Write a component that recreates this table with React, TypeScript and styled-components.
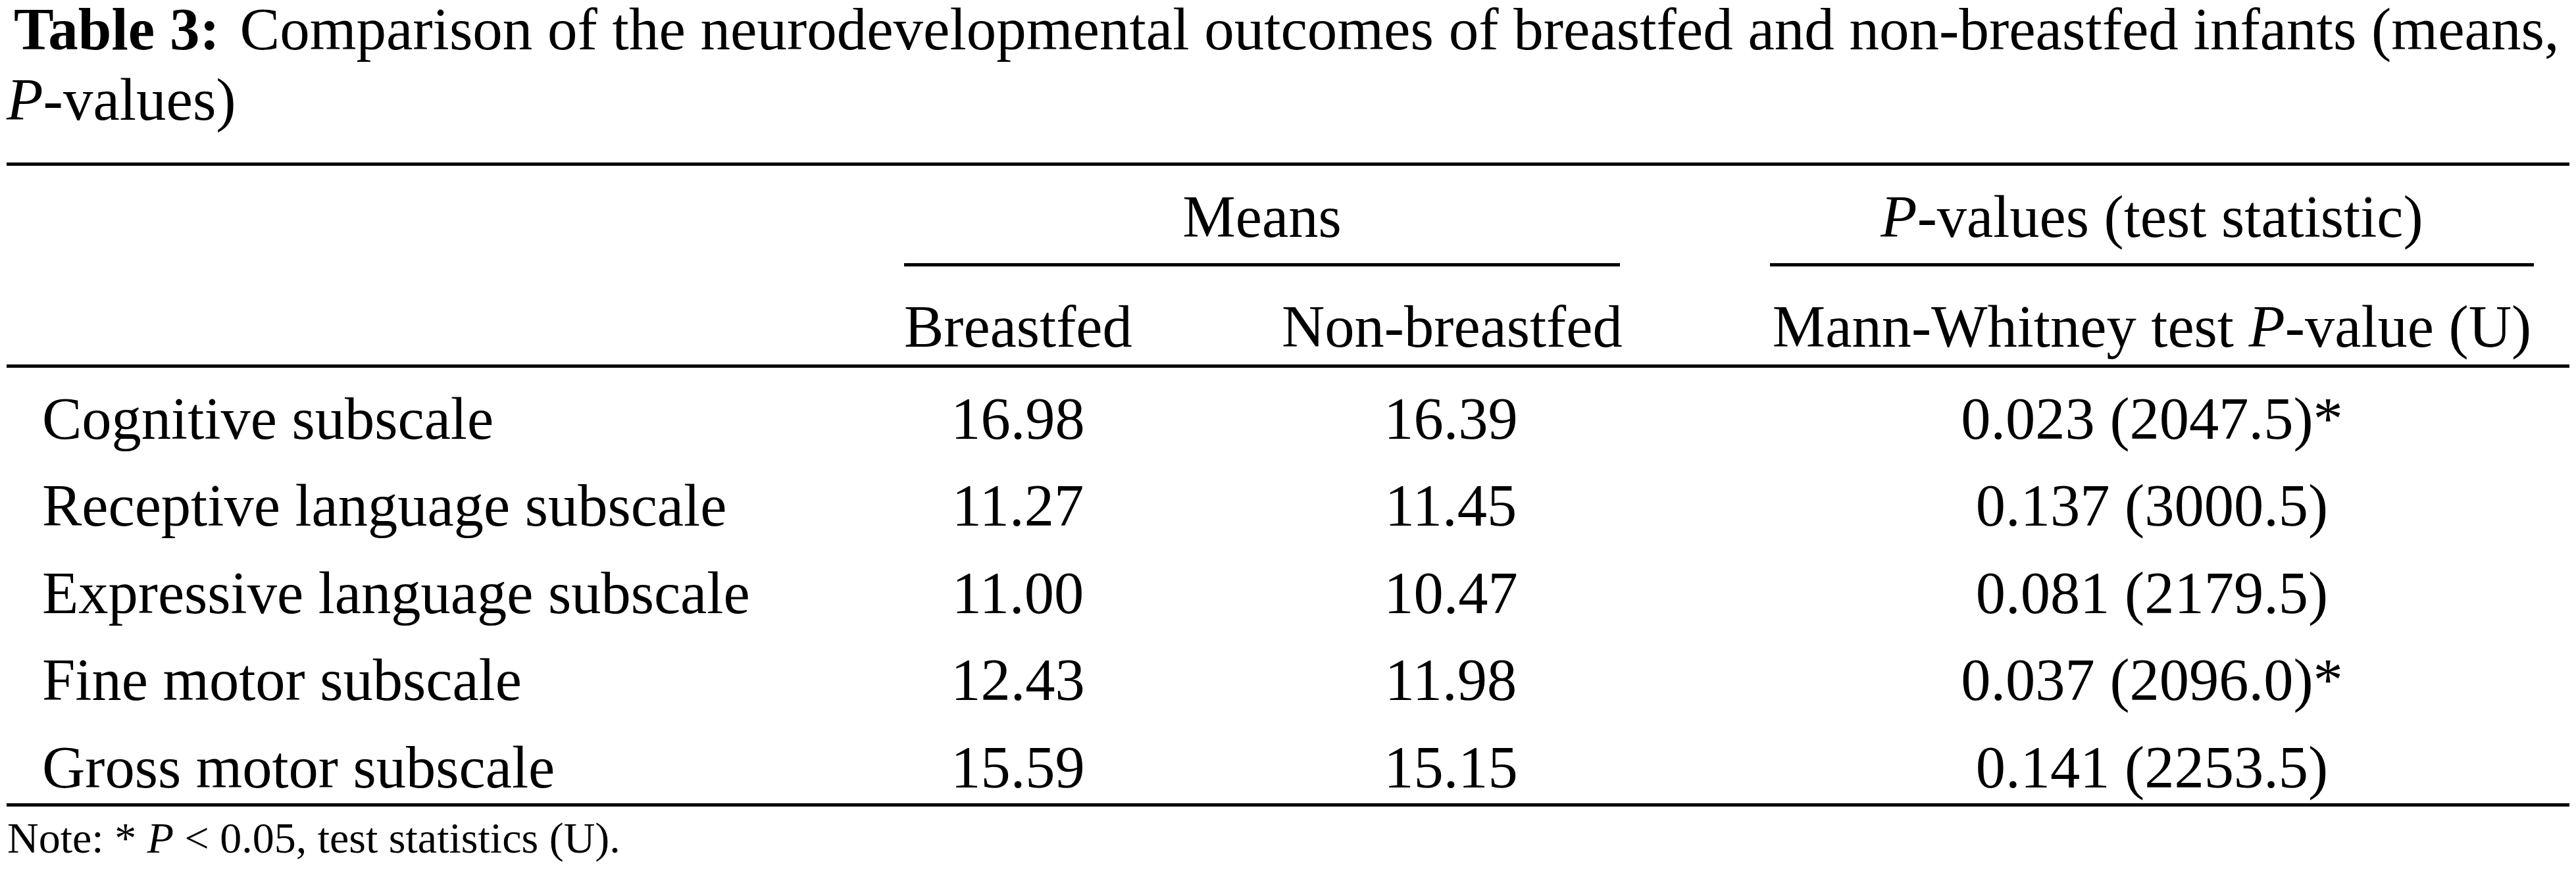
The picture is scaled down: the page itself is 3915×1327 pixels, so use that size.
import React from "react";
import styled, { createGlobalStyle } from "styled-components";

const Global = createGlobalStyle`
  html, body {
    margin: 0;
    padding: 0;
    background: #ffffff;
  }
  body {
    font-family: "Liberation Serif", "Times New Roman", serif;
    color: #000000;
    overflow: hidden;
  }
`;

const Page = styled.div`
  width: 3895px;
  padding: 0 10px;
`;

const Title = styled.div`
  font-size: 91px;
  line-height: 107px;
  margin-top: -9px;
  text-indent: 11px;
  white-space: nowrap;
`;

const TitleLabel = styled.b`
  font-weight: 700;
  margin-right: 8px;
`;

const I = styled.i`
  font-style: italic;
`;

const Rule = styled.div<{ $gap?: number }>`
  height: 5px;
  background: #000000;
  margin-top: ${(p) => p.$gap ?? 0}px;
`;

const COLUMNS = "1364px 346px 228px 514px 228px 1161px 1fr";

const HeadGrid = styled.div`
  display: grid;
  grid-template-columns: ${COLUMNS};
  font-size: 90.5px;
  line-height: 100px;
`;

const GroupHead = styled.div<{ $from: number; $to: number }>`
  grid-row: 1;
  grid-column: ${(p) => p.$from} / ${(p) => p.$to};
  text-align: center;
  padding: 27.5px 0 20.5px;
  border-bottom: 5px solid #000000;
  white-space: nowrap;
`;

const ColHead = styled.div<{ $col: number }>`
  grid-row: 2;
  grid-column: ${(p) => p.$col};
  text-align: center;
  padding: 42px 0 7px;
  white-space: nowrap;
`;

const BodyGrid = styled.div`
  display: grid;
  grid-template-columns: ${COLUMNS};
  row-gap: 32.5px;
  padding: 27.5px 0 4.5px;
  font-size: 90.5px;
  line-height: 100px;
`;

const LabelCell = styled.div`
  grid-column: 1;
  padding-left: 54px;
  white-space: nowrap;
`;

const ValueCell = styled.div<{ $col: number }>`
  grid-column: ${(p) => p.$col};
  text-align: center;
  white-space: nowrap;
`;

const Note = styled.div`
  font-size: 66px;
  line-height: 76px;
  margin-top: 9.7px;
  padding-left: 1px;
  white-space: nowrap;
`;

type Row = {
  label: string;
  breastfed: string;
  nonBreastfed: string;
  p: string;
};

const rows: Row[] = [
  { label: "Cognitive subscale", breastfed: "16.98", nonBreastfed: "16.39", p: "0.023 (2047.5)*" },
  { label: "Receptive language subscale", breastfed: "11.27", nonBreastfed: "11.45", p: "0.137 (3000.5)" },
  { label: "Expressive language subscale", breastfed: "11.00", nonBreastfed: "10.47", p: "0.081 (2179.5)" },
  { label: "Fine motor subscale", breastfed: "12.43", nonBreastfed: "11.98", p: "0.037 (2096.0)*" },
  { label: "Gross motor subscale", breastfed: "15.59", nonBreastfed: "15.15", p: "0.141 (2253.5)" },
];

export default function App() {
  return (
    <Page>
      <Global />
      <Title>
        <TitleLabel>Table 3:</TitleLabel> Comparison of the neurodevelopmental outcomes of breastfed and
        non-breastfed infants (means,
        <br />
        <I>P</I>-values)
      </Title>
      <Rule $gap={42} />
      <HeadGrid>
        <GroupHead $from={2} $to={5}>Means</GroupHead>
        <GroupHead $from={6} $to={7}>
          <I>P</I>-values (test statistic)
        </GroupHead>
        <ColHead $col={2}>Breastfed</ColHead>
        <ColHead $col={4}>Non-breastfed</ColHead>
        <ColHead $col={6}>
          Mann-Whitney test <I>P</I>-value (U)
        </ColHead>
      </HeadGrid>
      <Rule />
      <BodyGrid>
        {rows.map((r) => (
          <React.Fragment key={r.label}>
            <LabelCell>{r.label}</LabelCell>
            <ValueCell $col={2}>{r.breastfed}</ValueCell>
            <ValueCell $col={4}>{r.nonBreastfed}</ValueCell>
            <ValueCell $col={6}>{r.p}</ValueCell>
          </React.Fragment>
        ))}
      </BodyGrid>
      <Rule />
      <Note>
        Note: * <I>P</I> &lt; 0.05, test statistics (U).
      </Note>
    </Page>
  );
}
